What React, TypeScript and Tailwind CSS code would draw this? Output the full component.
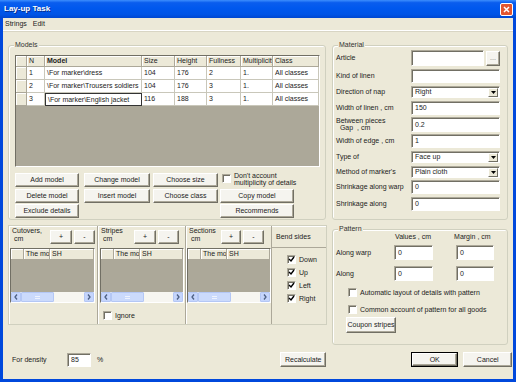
import React from 'react';

const Btn = ({ children, className = '' }: { children: React.ReactNode; className?: string }) => (
    <div
        className={
            'flex items-center justify-center bg-[#F5F4EF] border border-t-white border-l-white border-r-[#716F64] border-b-[#716F64] shadow-[inset_-1px_-1px_0_#ACA899] text-[#1a1a1a] whitespace-nowrap ' +
            className
        }
    >
        {children}
    </div>
);

const Edit = ({ value = '', className = '' }: { value?: string; className?: string }) => (
    <div
        className={
            'flex items-center pl-[3px] bg-white border border-t-[#ACA899] border-l-[#ACA899] border-r-white border-b-white shadow-[inset_1px_1px_0_#716F64] ' +
            className
        }
    >
        {value}
    </div>
);

const Combo = ({ value, className = '' }: { value: string; className?: string }) => (
    <div
        className={
            'flex items-center bg-white border border-t-[#ACA899] border-l-[#ACA899] border-r-white border-b-white shadow-[inset_1px_1px_0_#716F64] ' +
            className
        }
    >
        <span className="flex-1 pl-[3px]">{value}</span>
        <div className="w-[10px] h-[9px] mr-[1px] flex items-center justify-center bg-[#ECE9D8] border border-t-white border-l-white border-r-[#716F64] border-b-[#716F64]">
            <svg width="5" height="3" viewBox="0 0 5 3">
                <path d="M0 0h5L2.5 3z" fill="#000" />
            </svg>
        </div>
    </div>
);

const Check = ({ checked = false }: { checked?: boolean }) => (
    <div className="w-[9px] h-[9px] shrink-0 bg-white border border-t-[#ACA899] border-l-[#ACA899] border-r-white border-b-white shadow-[inset_1px_1px_0_#716F64] flex items-center justify-center">
        {checked && (
            <svg width="7" height="7" viewBox="0 0 7 7">
                <path d="M1 3l2 2 3-4" stroke="#000" strokeWidth="1.4" fill="none" />
            </svg>
        )}
    </div>
);

const Group = ({ label, className = '', children }: { label: string; className?: string; children: React.ReactNode }) => (
    <div className={'relative border border-[#D0D0BF] rounded-[3px] shadow-[inset_1px_1px_0_white] ' + className}>
        <span className="absolute -top-[5px] left-[5px] px-[1px] bg-[#ECE9D8] leading-[8px] text-[#333]">{label}</span>
        {children}
    </div>
);

const HeadCell = ({ w, children, bold = false }: { w: string; children?: React.ReactNode; bold?: boolean }) => (
    <div
        className={
            'h-full flex items-center pl-[2px] bg-[#ECE9D8] border-r border-b border-r-[#ACA899] border-b-[#ACA899] shadow-[inset_1px_1px_0_white] overflow-hidden whitespace-nowrap ' +
            w +
            (bold ? ' font-bold' : '')
        }
    >
        {children}
    </div>
);

const Cell = ({ w, children, focus = false }: { w: string; children?: React.ReactNode; focus?: boolean }) => (
    <div
        className={
            'h-full flex items-center pl-[2px] bg-white overflow-hidden whitespace-nowrap ' +
            w +
            (focus ? ' border border-[#333]' : ' border-r border-b border-[#C9C7BA]')
        }
    >
        {children}
    </div>
);

const models = [
    { n: '1', model: '\\For marker\\dress', size: '104', height: '176', full: '2' },
    { n: '2', model: '\\For marker\\Trousers soldiers', size: '104', height: '176', full: '3' },
    { n: '3', model: '\\For marker\\English jacket', size: '116', height: '188', full: '3' }
];

const Arrow = ({ dir }: { dir: 'l' | 'r' }) => (
    <div className="w-[10px] h-full flex items-center justify-center bg-[#C5D5FC] border border-[#B4C7F5] rounded-[1px]">
        <svg width="4" height="6" viewBox="0 0 4 6">
            <path d={dir === 'l' ? 'M3 0.5L1 3l2 2.5' : 'M1 0.5L3 3 1 5.5'} stroke="#4D6185" strokeWidth="1.3" fill="none" />
        </svg>
    </div>
);

const MiniGrid = ({ className = '' }: { className?: string }) => (
    <div className={'flex flex-col h-[55px] border border-t-[#716F64] border-l-[#716F64] border-r-white border-b-white ' + className}>
        <div className="flex h-[11px]">
            <HeadCell w="w-[13px]" />
            <HeadCell w="w-[26px]">The mor</HeadCell>
            <HeadCell w="flex-1">SH</HeadCell>
        </div>
        <div className="flex-1 bg-[#ACA899]" />
        <div className="flex h-[10px] bg-[#F7F6F1]">
            <Arrow dir="l" />
            <div className="w-[33px] h-full flex items-center justify-center bg-[#CBDAFC] border border-[#B4C7F5] rounded-[1px]">
                <div className="w-[5px] h-[3px] border-y border-[#EEF3FE]" />
            </div>
            <div className="flex-1" />
            <Arrow dir="r" />
        </div>
    </div>
);

const PanelHead = ({ l1, l2, plus, children }: { l1: string; l2: string; plus: string; children?: React.ReactNode }) => (
    <div className="h-[22px] flex items-start">
        <div className="pt-[1px] pl-[3px] leading-[8px] w-[36px] whitespace-pre">
            {l1}
            {'\n ' + l2}
        </div>
        {children}
        <Btn className={'mt-[4px] h-[14px] w-[22px] ' + plus}>+</Btn>
        <Btn className="mt-[4px] ml-[2px] h-[14px] w-[21px]">-</Btn>
    </div>
);

export default function App() {
    return (
        <div className="w-[516px] h-[382px] flex flex-col bg-[#0048DC] font-['Liberation_Sans',Arial,sans-serif] text-[7px] leading-[8px] text-[#222] overflow-hidden">
            <div className="h-[18px] shrink-0 flex items-center justify-between pl-[4px] pr-[3px] bg-[linear-gradient(180deg,#3D8EFD_0%,#0A5DEE_15%,#0058EE_45%,#0054E6_80%,#0047D0_100%)]">
                <span className="text-white font-bold text-[8px] [text-shadow:1px_1px_0_#0B2F8C]">Lay-up Task</span>
                <div className="w-[13px] h-[13px] rounded-[2px] bg-[#E2552F] border border-white flex items-center justify-center">
                    <svg width="7" height="7" viewBox="0 0 7 7">
                        <path d="M1 1l5 5M6 1L1 6" stroke="white" strokeWidth="1.5" />
                    </svg>
                </div>
            </div>
            <div className="flex-1 mx-[3px] mb-[3px] bg-[#ECE9D8] flex flex-col">
                <div className="h-[13px] flex items-center gap-[6px] pl-[2px] border-b border-b-white shadow-[0_1px_0_#D8D5C4]">
                    <span>Strings</span>
                    <span>Edit</span>
                </div>
                <div className="flex mt-[14px] pl-[5px] gap-[6px]">
                    <Group label="Models" className="w-[318px] h-[175px] flex flex-col">
                        <div className="ml-[6px] mt-[9px] w-[305px] h-[112px] flex flex-col border border-t-[#716F64] border-l-[#716F64] border-r-white border-b-white">
                            <div className="flex h-[11px]">
                                <HeadCell w="w-[11px]" />
                                <HeadCell w="w-[18px]">N</HeadCell>
                                <HeadCell w="w-[97px]" bold>
                                    Model
                                </HeadCell>
                                <HeadCell w="w-[33px]">Size</HeadCell>
                                <HeadCell w="w-[32px]">Height</HeadCell>
                                <HeadCell w="w-[34px]">Fullness</HeadCell>
                                <HeadCell w="w-[32px]">Multiplicity</HeadCell>
                                <HeadCell w="flex-1">Class</HeadCell>
                            </div>
                            {models.map((m, i) => (
                                <div key={m.n} className="flex h-[13px]">
                                    <HeadCell w="w-[11px]" />
                                    <Cell w="w-[18px]">{m.n}</Cell>
                                    <Cell w="w-[97px]" focus={i === 2}>
                                        {m.model}
                                    </Cell>
                                    <Cell w="w-[33px]">{m.size}</Cell>
                                    <Cell w="w-[32px]">{m.height}</Cell>
                                    <Cell w="w-[34px]">{m.full}</Cell>
                                    <Cell w="w-[32px]">1.</Cell>
                                    <Cell w="flex-1">All classes</Cell>
                                </div>
                            ))}
                            <div className="flex-1 bg-[#ACA899]" />
                        </div>
                        <div className="ml-[6px] mt-[6px] flex items-center h-[14px]">
                            <Btn className="w-[64px] h-full">Add model</Btn>
                            <Btn className="ml-[5px] w-[66px] h-full">Change model</Btn>
                            <Btn className="ml-[3px] w-[65px] h-full">Choose size</Btn>
                            <div className="ml-[4px] flex items-start gap-[3px]">
                                <Check />
                                <span className="leading-[7px] -mt-[2px]">
                                    Don't account
                                    <br />
                                    multiplicity of details
                                </span>
                            </div>
                        </div>
                        <div className="ml-[6px] mt-[2px] flex h-[14px]">
                            <Btn className="w-[64px] h-full">Delete model</Btn>
                            <Btn className="ml-[5px] w-[66px] h-full">Insert model</Btn>
                            <Btn className="ml-[3px] w-[65px] h-full">Choose class</Btn>
                            <Btn className="ml-[2px] w-[74px] h-full">Copy model</Btn>
                        </div>
                        <div className="ml-[6px] mt-[1px] flex h-[14px]">
                            <Btn className="w-[64px] h-full">Exclude details</Btn>
                            <Btn className="ml-[141px] w-[74px] h-full">Recommends</Btn>
                        </div>
                    </Group>
                    <Group label="Material" className="w-[176px] h-[175px] flex flex-col pl-[3px]">
                        <div className="mt-[4px] h-[16px] flex items-center">
                            <span className="w-[75px]">Article</span>
                            <Edit className="w-[73px] h-full" />
                            <Btn className="ml-[2px] w-[14px] h-[15px] text-[#777]">...</Btn>
                        </div>
                        <div className="mt-[3px] h-[14px] flex items-center">
                            <span className="w-[75px]">Kind of linen</span>
                            <Edit className="w-[89px] h-full" />
                        </div>
                        <div className="mt-[3px] h-[12px] flex items-center">
                            <span className="w-[75px]">Direction of nap</span>
                            <Combo className="w-[89px] h-full" value="Right" />
                        </div>
                        <div className="mt-[3px] h-[14px] flex items-center">
                            <span className="w-[75px]">Width of linen , cm</span>
                            <Edit className="w-[89px] h-full" value="150" />
                        </div>
                        <div className="mt-[2px] h-[15px] flex items-center">
                            <span className="w-[75px] leading-[7px] -mt-[2px]">
                                Between pieces
                                <br />
                                &nbsp;&nbsp;Gap&nbsp;&nbsp;, cm
                            </span>
                            <Edit className="w-[89px] h-full" value="0.2" />
                        </div>
                        <div className="mt-[2px] h-[14px] flex items-center">
                            <span className="w-[75px]">Width of edge , cm</span>
                            <Edit className="w-[89px] h-full" value="1" />
                        </div>
                        <div className="mt-[3px] h-[12px] flex items-center">
                            <span className="w-[75px]">Type of</span>
                            <Combo className="w-[89px] h-full" value="Face up" />
                        </div>
                        <div className="mt-[3px] h-[12px] flex items-center">
                            <span className="w-[75px]">Method of marker's</span>
                            <Combo className="w-[89px] h-full" value="Plain cloth" />
                        </div>
                        <div className="mt-[2px] h-[14px] flex items-center">
                            <span className="w-[75px]">Shrinkage along warp</span>
                            <Edit className="w-[89px] h-full" value="0" />
                        </div>
                        <div className="mt-[3px] h-[14px] flex items-center">
                            <span className="w-[75px]">Shrinkage along</span>
                            <Edit className="w-[89px] h-full" value="0" />
                        </div>
                    </Group>
                </div>
                <div className="flex items-start mt-[5px] pl-[5px] gap-[5px]">
                    <div className="w-[319px] h-[100px] flex border border-[#D0D0BF] shadow-[inset_1px_1px_0_white]">
                        <div className="w-[89px] flex flex-col border-r border-r-[#ACA899] shadow-[1px_0_0_white]">
                            <PanelHead l1="Cutovers," l2="cm" plus="ml-[5px]" />
                            <MiniGrid className="ml-[1px] mr-[2px]" />
                        </div>
                        <div className="w-[88px] flex flex-col border-r border-r-[#ACA899] shadow-[1px_0_0_white]">
                            <PanelHead l1="Stripes" l2="cm" plus="ml-[0px]" />
                            <MiniGrid className="ml-[2px] mr-[1px]" />
                            <div className="mt-[8px] ml-[5px] flex items-center gap-[3px]">
                                <Check />
                                <span>Ignore</span>
                            </div>
                        </div>
                        <div className="w-[85px] flex flex-col">
                            <PanelHead l1="Sections" l2="cm" plus="ml-[-1px] !w-[20px]" />
                            <MiniGrid className="ml-[1px]" />
                        </div>
                        <div className="flex-1 flex flex-col border-l border-l-[#ACA899]">
                            <div className="h-[22px] flex items-center pl-[4px] border-b border-b-[#ACA899]">Bend sides</div>
                            <div className="flex flex-col gap-[4px] pl-[15px] pt-[7px]">
                                {['Down', 'Up', 'Left', 'Right'].map((s) => (
                                    <div key={s} className="flex items-center gap-[3px] h-[9px]">
                                        <Check checked />
                                        <span>{s}</span>
                                    </div>
                                ))}
                            </div>
                        </div>
                    </div>
                    <Group label="Pattern" className="mt-[4px] w-[176px] h-[116px] flex flex-col pl-[3px]">
                        <div className="mt-[3px] flex h-[8px]">
                            <span className="ml-[59px]">Values , cm</span>
                            <span className="ml-[23px]">Margin , cm</span>
                        </div>
                        <div className="mt-[4px] h-[15px] flex items-center">
                            <span className="w-[58px]">Along warp</span>
                            <Edit className="w-[39px] h-full" value="0" />
                            <Edit className="ml-[23px] w-[38px] h-full" value="0" />
                        </div>
                        <div className="mt-[6px] h-[15px] flex items-center">
                            <span className="w-[58px]">Along</span>
                            <Edit className="w-[39px] h-full" value="0" />
                            <Edit className="ml-[23px] w-[38px] h-full" value="0" />
                        </div>
                        <div className="mt-[7px] ml-[12px] flex items-center gap-[3px]">
                            <Check />
                            <span>Automatic layout of details with pattern</span>
                        </div>
                        <div className="mt-[8px] ml-[12px] flex items-center gap-[3px]">
                            <Check />
                            <span>Common account of pattern for all goods</span>
                        </div>
                        <Btn className="mt-[3px] ml-[10px] w-[50px] h-[16px]">Coupon stripes</Btn>
                    </Group>
                </div>
                <div className="flex items-center mt-[7px] h-[15px] pl-[9px]">
                    <span className="w-[55px]">For density</span>
                    <Edit className="w-[24px] h-[14px]" value="85" />
                    <span className="ml-[6px]">%</span>
                    <Btn className="ml-[177px] w-[46px] h-full">Recalculate</Btn>
                    <div className="ml-[85px] w-[47px] h-full border border-black flex">
                        <Btn className="flex-1 h-full">OK</Btn>
                    </div>
                    <Btn className="ml-[5px] w-[49px] h-full">Cancel</Btn>
                </div>
            </div>
        </div>
    );
}
